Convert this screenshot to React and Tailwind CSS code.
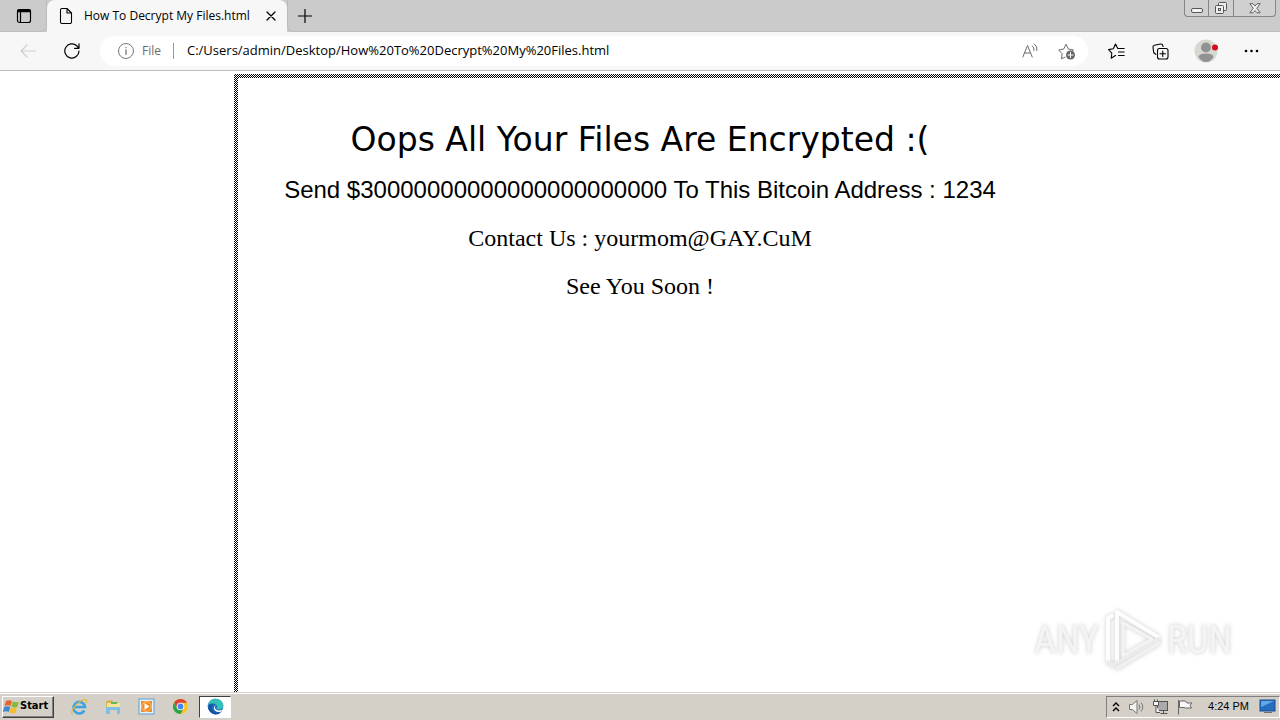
import React from "react";

const stroke = { fill: "none", stroke: "currentColor", strokeLinecap: "round", strokeLinejoin: "round" };

function TabStrip() {
  return (
    <div className="flex h-8 items-stretch bg-[#cbcbcb]">
      <button aria-label="Tab actions" className="flex w-[47px] items-center justify-center rounded-br-md border-r border-b border-[#bcbcbc] pl-[2px] text-black">
        <svg width="16" height="16" viewBox="0 0 16 16" {...stroke} strokeWidth="1.2">
          <rect x="1.5" y="1.5" width="13" height="13" rx="2" />
          <path d="M2 3.2h12M2 2.4h12" strokeWidth="2" />
          <path d="M4.5 4v10" />
        </svg>
      </button>
      <div className="flex w-60 items-center rounded-t-lg bg-[#f7f7f7] pl-3">
        <svg width="14" height="18" viewBox="0 0 14 18" {...stroke} strokeWidth="1.1" className="text-black">
          <path d="M3 1.5h5l4.500 4.500v9a1.500 1.500 0 0 1-1.500 1.500h-8a1.500 1.500 0 0 1-1.500-1.500v-12A1.500 1.500 0 0 1 3 1.500zM8 1.500v4.500h4.500" />
        </svg>
        <span className="ml-[11px] flex-1 whitespace-nowrap text-[12px] leading-4">How To Decrypt My Files.html</span>
        <button aria-label="Close tab" className="mr-2 flex h-4 w-4 items-center justify-center">
          <svg width="10" height="10" viewBox="0 0 10 10" {...stroke} strokeWidth="1.3"><path d="M1 1l8 8M9 1l-8 8" /></svg>
        </button>
      </div>
      <div className="flex flex-1 rounded-bl-md border-b border-l border-[#bcbcbc]">
        <button aria-label="New tab" className="flex w-[34px] items-center justify-center">
          <svg width="14" height="14" viewBox="0 0 14 14" {...stroke} strokeWidth="1.2"><path d="M7 .5v13M.5 7h13" /></svg>
        </button>
        <div className="ml-auto mr-1 flex h-[17px] rounded-b border border-t-0 border-[#858585] bg-[#d0d0d0] text-[#555]">
          <button aria-label="Minimize" className="flex w-6 items-end justify-center border-r border-[#858585] pb-[3px]">
            <svg width="12" height="5" viewBox="0 0 12 5"><rect x=".5" y=".5" width="11" height="4" rx="1.500" fill="#f4f4f4" stroke="#555" /></svg>
          </button>
          <button aria-label="Restore" className="flex w-[25px] items-center justify-center border-r border-[#858585]">
            <svg width="14" height="14" viewBox="0 0 14 14" fill="#eee" stroke="#555">
              <rect x="4.500" y="1.500" width="8" height="8" rx="1" />
              <rect x="1.500" y="4.500" width="8" height="8" rx="1" />
              <rect x="4.500" y="7.500" width="2" height="2" />
            </svg>
          </button>
          <button aria-label="Close" className="flex w-[41px] items-center justify-center">
            <svg width="12" height="11" viewBox="0 0 12 11" fill="#eee" stroke="#555" strokeWidth=".9">
              <path d="M.8.700h3.200L6 3 8 .700h3.200L7.800 5.300l3.400 4.500H8L6 7.600 4 9.800H.800l3.400-4.500z" />
            </svg>
          </button>
        </div>
      </div>
    </div>
  );
}

function Toolbar() {
  return (
    <div className="flex h-[39px] items-center border-b border-[#bdbdbd] bg-[#f7f7f7]">
      <button aria-label="Back" className="ml-5 text-[#cfcfcf]">
        <svg width="16" height="16" viewBox="0 0 16 16" {...stroke} strokeWidth="1.2"><path d="M15.500 8H1M7 2L1 8l6 6" /></svg>
      </button>
      <button aria-label="Refresh" className="ml-7 text-black">
        <svg width="16" height="16" viewBox="0 0 16 16" {...stroke} strokeWidth="1.200"><path d="M15 8A7.100 7.100 0 1 1 12.800 2.800L14.800 5M15 .800v4.500h-4.500" /></svg>
      </button>
      <div className="ml-5 flex h-[30px] flex-1 items-center rounded-full bg-white pl-[18px] pr-3 text-[13px] text-[#6b6b6b]">
        <svg width="16" height="16" viewBox="0 0 16 16" {...stroke} className="text-[#777]"><circle cx="8" cy="8" r="7.500" /><path d="M8 7v4.500M8 4.500v.2" strokeWidth="1.300" /></svg>
        <span className="ml-2 text-[12px]">File</span>
        <span className="ml-3 h-4 w-px bg-[#999]" />
        <input aria-label="Address" readOnly value="C:/Users/admin/Desktop/How%20To%20Decrypt%20My%20Files.html" className="ml-[13px] min-w-0 flex-1 bg-transparent text-[13px] text-black outline-none" />
        <button aria-label="Read aloud">
          <svg width="16" height="16" viewBox="0 0 16 16" {...stroke}><path d="M.800 14L5.500 2.500 10.200 14M2.500 10h6M10.500 3q2 1.500 1.500 4.500M12.500 1q3.200 2.500 2.500 6.500" /></svg>
        </button>
        <button aria-label="Add to favorites" className="ml-5">
          <svg width="18" height="17" viewBox="0 0 18 17" {...stroke}><path d="M7 14.200l-3.500 1.600.6-5.100L.8 7l4.900-1L8 1.200 10.400 6l5 1-1.800 1.500" /><circle cx="12.500" cy="12" r="4.500" fill="#666" stroke="none" /><path d="M12.500 9.500v5M10 12h5" stroke="white" /></svg>
        </button>
      </div>
      <div className="flex items-center pr-[21px] pl-5 text-black">
        <button aria-label="Favorites"><svg width="17" height="17" viewBox="0 0 17 17" {...stroke} strokeWidth="1.100"><path d="M7 12.800l-3.800 2.400.6-5L.600 6.600l4.700-.9L7.500 1l2.300 4.500h6.400M10.500 9h5.700M10.500 12.500h5.700M7 12.800l.7-.3" /></svg></button>
        <button aria-label="Collections" className="ml-[27px]"><svg width="17" height="17" viewBox="0 0 17 17" {...stroke} strokeWidth="1.100"><path d="M3.800 11.300L1.800 9.800 1 4.500a2 2 0 0 1 1.500-2.300L8.500 1a2 2 0 0 1 2.300 1.500l.3 1" /><rect x="5.500" y="5.500" width="10.500" height="10.500" rx="2" /><path d="M10.750 8v5.500M8 10.750h5.500" /></svg></button>
        <button aria-label="Profile" className="ml-[25px]"><svg width="25" height="24" viewBox="0 0 25 24"><circle cx="12" cy="12" r="11.500" fill="#d8d8d3" /><circle cx="12" cy="8.500" r="5" fill="#929292" /><path d="M4.500 18q0-3.500 7.500-3.500t7.500 3.500q-3 5-7.500 5t-7.500-5z" fill="#929292" /><circle cx="21" cy="8.500" r="3" fill="#d40d18" /></svg></button>
        <button aria-label="More" className="ml-6"><svg width="16" height="16" viewBox="0 0 16 16"><circle cx="3" cy="8" r="1.300" /><circle cx="8.500" cy="8" r="1.300" /><circle cx="14" cy="8" r="1.300" /></svg></button>
      </div>
    </div>
  );
}

function Watermark() {
  return (
    <div className="absolute right-12 bottom-5 flex items-center font-['Liberation_Sans_Narrow','Roboto_Condensed','Liberation_Sans',sans-serif] text-[38px] leading-[64px] text-[#f4f4f4] [filter:drop-shadow(0_0_2px_#ccc)]">
      <span>ANY</span>
      <svg className="ml-1" width="60" height="64" viewBox="0 0 60 64" fill="none" strokeLinecap="round" strokeLinejoin="round">
        <path d="M9 8q-4 0-4 4v42" stroke="#fdfdfd" strokeWidth="4" />
        <path d="M14 52V4l41 25" stroke="#fdfdfd" strokeWidth="4" />
        <path d="M20 15v33l29-17z" stroke="#f4f4f4" strokeWidth="3" />
        <path d="M5 54l5 3 45-26" stroke="#ececec" strokeWidth="4" />
        <path d="M14 60l42-25" stroke="#f0f0f0" strokeWidth="4" />
      </svg>
      <span className="ml-1">RUN</span>
    </div>
  );
}

const checker = "bg-[repeating-conic-gradient(#000_0%_25%,#fff_0%_50%)] bg-[length:2px_2px]";

function Page() {
  return (
    <main className="relative grid min-h-0 flex-1 grid-cols-1 grid-rows-1 overflow-hidden bg-white text-black">
      <div className={`col-start-1 row-start-1 mt-[3px] ml-[234px] flex pt-1 pl-1 ${checker}`}>
        <div className="flex-1 bg-white" />
      </div>
      <article className="col-start-1 row-start-1 pt-[49px] text-center text-[24px]">
        <h1 className="font-['DejaVu_Sans',sans-serif] text-[33px] leading-10">Oops All Your Files Are Encrypted :(</h1>
        <p className="mt-4 font-['Liberation_Sans',sans-serif] leading-7">Send $30000000000000000000000 To This Bitcoin Address : 1234</p>
        <p className="mt-5 font-['Liberation_Serif',serif] leading-7">Contact Us : yourmom@GAY.CuM</p>
        <p className="mt-5 font-['Liberation_Serif',serif] leading-7">See You Soon !</p>
      </article>
      <Watermark />
    </main>
  );
}

function Taskbar() {
  return (
    <footer className="flex h-7 items-center border-t border-[#d4d0c8] bg-[#d4d0c8] font-['DejaVu_Sans_Condensed','DejaVu_Sans',sans-serif] text-[11px] text-black shadow-[inset_0_1px_0_#fff]">
      <button className="ml-[2px] flex h-[22px] w-[52px] items-center border border-t-white border-l-white border-r-[#404040] border-b-[#404040] font-bold shadow-[inset_-1px_-1px_0_#808080]">
        <svg width="17" height="16" viewBox="0 0 17 16">
          <path d="M3 2q3-1.500 6 0L7.500 7q-3-1.500-6 0z" fill="#e8622c" />
          <path d="M9.800 2.500q3 1.500 6 .2L14.300 8q-3 1.200-6-.5z" fill="#83b93c" />
          <path d="M1.300 8q3-1.300 6 0L5.800 13q-3-1.300-6 0z" fill="#3f88cf" />
          <path d="M8 8.300q3 1.500 6 .3l-1.500 5.200q-3 1.200-6-.3z" fill="#f5bd2a" />
        </svg>
        Start
      </button>
      <button aria-label="Internet Explorer" className="ml-4">
        <svg width="18" height="18" viewBox="0 0 18 18" fill="none">
          <path d="M14.300 12.500A5.800 5.800 0 1 1 15 9H5" stroke="#3ba4df" strokeWidth="2.600" />
          <path d="M2.500 16.500C-1 14 7 4 14 1.800c3-.8 3 1.200 2 3" stroke="#e5b83b" strokeWidth="1.200" />
        </svg>
      </button>
      <button aria-label="Explorer" className="ml-4">
        <svg width="18" height="18" viewBox="0 0 18 18">
          <path d="M2 3l6-1 1 2h6v8H2z" fill="#d9b34c" /><path d="M3 5h13v7H3z" fill="#f7e49a" /><path d="M7 4h6v2H7z" fill="#64b65b" />
          <path d="M2 9h14v6q0 1-1 1h-2v-4H6v4H3q-1 0-1-1z" fill="#7fbfe5" />
        </svg>
      </button>
      <button aria-label="Media Player" className="ml-4">
        <svg width="17" height="17" viewBox="0 0 17 17"><rect x="1" y="1" width="15" height="15" fill="#e5f1fb" stroke="#5c9dd4" /><rect x="3" y="3" width="11" height="11" fill="#f28a18" /><circle cx="8.500" cy="8.500" r="4.800" fill="#f28a18" stroke="#fff" strokeWidth=".5" /><path d="M6.500 5l5 3.500-5 3.500z" fill="white" /></svg>
      </button>
      <button aria-label="Chrome" className="ml-[17px]">
        <svg width="17" height="17" viewBox="0 0 17 17">
          <circle cx="8.500" cy="8.500" r="7.500" fill="#f9c51c" />
          <path d="M2 4.750A7.500 7.500 0 0 1 15 4.750H8.500L5.300 10.300z" fill="#df4334" />
          <path d="M2 4.750A7.500 7.500 0 0 0 8.500 16l3.200-5.600H5.300z" fill="#2ba24c" />
          <circle cx="8.500" cy="8.500" r="3.800" fill="white" /><circle cx="8.500" cy="8.500" r="2.900" fill="#4285f4" />
        </svg>
      </button>
      <button aria-label="Edge" className="ml-[10px] flex h-[22px] w-8 items-center justify-center border border-t-[#404040] border-l-[#404040] border-r-white border-b-white bg-white">
        <svg width="17" height="17" viewBox="0 0 17 17">
          <circle cx="8.500" cy="8.500" r="7.800" fill="#176fc1" />
          <path d="M.800 8C1.500 3 5 .700 8.500.700c4.500 0 7.800 3 7.800 6.700 0 3-2.500 4.300-5 4.100-1.800-.1-2-1-1.500-1.700C11 8 9 5.500 6 5.500.700 5.500.800 8 .800 8z" fill="#36bfb5" />
          <path d="M6 6.300q-3 3 0 6.500 3.500 3.700 8.500.7-3 4.300-8.200 2.400Q1 13 1.500 9 2.500 5.500 6 6.300z" fill="#1b4f9c" />
          <path d="M9.500 7q-3 2-.7 4.300 2.500 2.200 6.200.5l-.8 1.700q-4.500 1.500-6.700-1.500Q5.500 8.500 9.500 7z" fill="white" />
        </svg>
      </button>
      <div className="ml-auto flex h-[22px] items-center border border-t-[#808080] border-l-[#808080] border-r-white border-b-white pl-[5px] pr-[3px]">
        <button aria-label="Show hidden icons"><svg width="8" height="10" viewBox="0 0 8 10" fill="none" stroke="black" strokeWidth="1.400"><path d="M1 4l3-3 3 3M1 9l3-3 3 3" /></svg></button>
        <svg className="ml-2" width="18" height="16" viewBox="0 0 18 16" fill="#f5f5f5" stroke="#777"><path d="M1.500 5.500h3L9 1.500v13l-4.500-4h-3z" /><path d="M11 5.500q2 2.500 0 5M13 3.500q3.500 4.500 0 9" fill="none" /></svg>
        <svg className="ml-[6px]" width="18" height="16" viewBox="0 0 18 16" fill="#f6f6f6" stroke="#555"><rect x="5.500" y="2.500" width="10" height="9" fill="#aaa" /><path d="M8.500 14.500h7M11.500 12v2M1.500 2.500h5v4h-5zM2.500.500v2M5.500.500v2M4 6.500v7h4" /></svg>
        <svg className="ml-[6px]" width="18" height="16" viewBox="0 0 18 16" fill="#f8f8f8" stroke="#666"><path d="M2.500 1v14.500M3.500 2h6l1.500 2h5l-2 2.500 1.500 2.500H9.500L8 8.500H3.500z" /></svg>
        <time className="ml-[14px] font-['Liberation_Sans',sans-serif]">4:24 PM</time>
        <svg className="ml-[10px]" width="17" height="15" viewBox="0 0 17 15"><rect x="1" y="1" width="15" height="11" fill="#236fbd" stroke="#184a91" /><path d="M2 2h13L2 8z" fill="#62a7e8" /><path d="M5 13.500h8" stroke="#707070" /></svg>
      </div>
    </footer>
  );
}

export default function App() {
  return (
    <div className="flex h-screen flex-col font-['Open_Sans','Noto_Sans',sans-serif] text-black">
      <header><TabStrip /><Toolbar /></header>
      <Page />
      <Taskbar />
    </div>
  );
}
